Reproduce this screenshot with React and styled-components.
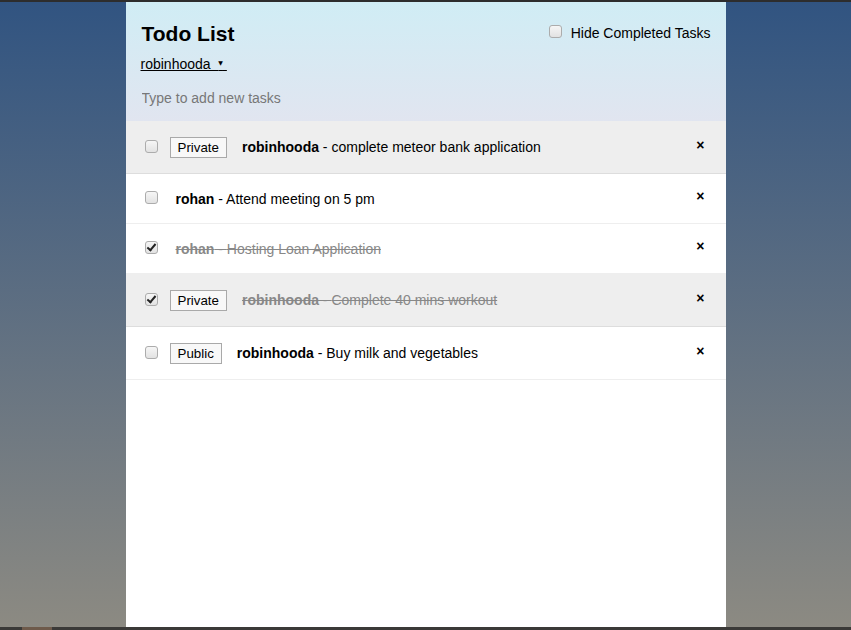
import React from 'react';
import styled, { createGlobalStyle, css } from 'styled-components';

const GlobalStyle = createGlobalStyle`
  html, body, #root {
    margin: 0;
    padding: 0;
    height: 100%;
  }
  body {
    font-family: "Liberation Sans", Arial, sans-serif;
    font-size: 14px;
    color: #000;
  }
`;

const Page = styled.div`
  display: flex;
  flex-direction: column;
  height: 100vh;
  overflow: hidden;
`;

const TopEdge = styled.div`
  height: 2px;
  background: #2d2d2d;
  flex-shrink: 0;
`;

const BottomEdge = styled.div`
  height: 3px;
  flex-shrink: 0;
  background: #3b3a38;
  display: flex;
`;

const BottomChip = styled.span`
  width: 30px;
  margin-left: 22px;
  background: #6e5a4a;
`;

const Main = styled.div`
  flex: 1;
  display: flex;
  justify-content: center;
  background-color: #315481;
  background-image: linear-gradient(to bottom, #315481, #8c8a82 100%);
`;

const Container = styled.div`
  width: 600px;
  background: white;
  display: flex;
  flex-direction: column;
`;

const Header = styled.header`
  background: #d2edf4;
  background-image: linear-gradient(to bottom, #d0edf5, #e1e5f0 100%);
  padding: 20px 15px 15px 16px;
`;

const TitleRow = styled.div`
  display: flex;
  justify-content: space-between;
  align-items: flex-start;
`;

const Title = styled.h1`
  font-size: 21px;
  font-weight: bold;
  margin: 0 0 10px 0;
  line-height: 24px;
`;

const HideToggle = styled.label`
  display: flex;
  align-items: center;
  margin-top: 1px;
  font-size: 14px;
`;

const Checkbox = styled.input.attrs({ type: 'checkbox' })`
  appearance: none;
  -webkit-appearance: none;
  width: 13px;
  height: 13px;
  margin: 2px 3px 4px 4px;
  box-sizing: border-box;
  border: 1px solid #acacac;
  border-radius: 3px;
  background: linear-gradient(to bottom, #f6f6f6, #e2e2e2);
  position: relative;
  flex-shrink: 0;

  &:checked::after {
    content: '';
    position: absolute;
    left: 3px;
    top: 0px;
    width: 3px;
    height: 7px;
    border: solid #222;
    border-width: 0 2px 2px 0;
    transform: rotate(40deg);
  }
`;

const HideLabel = styled.span`
  margin-left: 6px;
`;

const UserLink = styled.a`
  display: inline-block;
  margin-left: -1px;
  color: #000;
  text-decoration: underline;
  line-height: 16px;
  height: 17px;
  cursor: pointer;
  white-space: pre;
`;

const Caret = styled.span`
  font-size: 6px;
  line-height: 0;
  font-family: "DejaVu Sans", sans-serif;
  vertical-align: 4px;
`;

const NewTaskForm = styled.form`
  margin-top: 7px;
  margin-bottom: -10px;
`;

const NewTaskInput = styled.input`
  box-sizing: border-box;
  padding: 10px 80px 10px 0;
  background: transparent;
  border: none;
  width: 100%;
  font-size: 14px;
  font-family: "Liberation Sans", Arial, sans-serif;
  &::placeholder {
    color: #777;
  }
  &:focus {
    outline: 0;
  }
`;

const List = styled.ul`
  margin: 0;
  padding: 0;
`;

const Item = styled.li`
  list-style: none;
  padding: 15px;
  border-bottom: 1px solid #eee;
  display: flex;
  align-items: center;
  ${(p) => p.$private && css`
    background: #eee;
    border-color: #ddd;
  `}
  ${(p) => p.$checked && css`
    color: #888;
  `}
`;

const PrivacyButton = styled.button`
  margin: 1px 4px 0 9px;
  font-family: "Liberation Sans", Arial, sans-serif;
  font-size: 13.33px;
  padding: 1px 7px;
  height: 21px;
  border: 1px solid #a9a9a9;
  border-radius: 0;
  background: #f8f8f8;
  color: #000;
  line-height: 17px;
`;

const TaskText = styled.span`
  margin-left: ${(p) => (p.$afterButton ? '11px' : '15px')};
  flex: 1;
  line-height: 16px;
  ${(p) => p.$checked && css`
    text-decoration: line-through;
  `}
`;

const Owner = styled.strong`
  font-weight: bold;
`;

const DeleteButton = styled.button`
  font-weight: bold;
  background: none;
  border: none;
  font-size: 14px;
  padding: 1px 6px 1px 6px;
  color: #000;
  font-family: "Liberation Sans", Arial, sans-serif;
  margin-top: -5px;
`;

const tasks = [
  { id: 1, owner: 'robinhooda', text: 'complete meteor bank application', privacy: 'Private', private: true, checked: false },
  { id: 2, owner: 'rohan', text: 'Attend meeting on 5 pm', checked: false },
  { id: 3, owner: 'rohan', text: 'Hosting Loan Application', checked: true },
  { id: 4, owner: 'robinhooda', text: 'Complete 40 mins workout', privacy: 'Private', private: true, checked: true },
  { id: 5, owner: 'robinhooda', text: 'Buy milk and vegetables', privacy: 'Public', private: false, checked: false },
];

function Task({ task }) {
  return (
    <Item $private={task.private} $checked={task.checked}>
      <Checkbox defaultChecked={task.checked} />
      {task.privacy && <PrivacyButton>{task.privacy}</PrivacyButton>}
      <TaskText $checked={task.checked} $afterButton={!!task.privacy}>
        <Owner>{task.owner}</Owner> - {task.text}
      </TaskText>
      <DeleteButton>&times;</DeleteButton>
    </Item>
  );
}

export default function App() {
  return (
    <Page>
      <GlobalStyle />
      <TopEdge />
      <Main>
        <Container>
          <Header>
            <TitleRow>
              <Title>Todo List</Title>
              <HideToggle>
                <Checkbox />
                <HideLabel>Hide Completed Tasks</HideLabel>
              </HideToggle>
            </TitleRow>
            <UserLink>
              {'robinhooda\u00a0\u00a0'}<Caret>▼</Caret>{'\u00a0'}
            </UserLink>
            <NewTaskForm onSubmit={(e) => e.preventDefault()}>
              <NewTaskInput type="text" placeholder="Type to add new tasks" />
            </NewTaskForm>
          </Header>
          <List>
            {tasks.map((t) => (
              <Task key={t.id} task={t} />
            ))}
          </List>
        </Container>
      </Main>
      <BottomEdge>
        <BottomChip />
      </BottomEdge>
    </Page>
  );
}
